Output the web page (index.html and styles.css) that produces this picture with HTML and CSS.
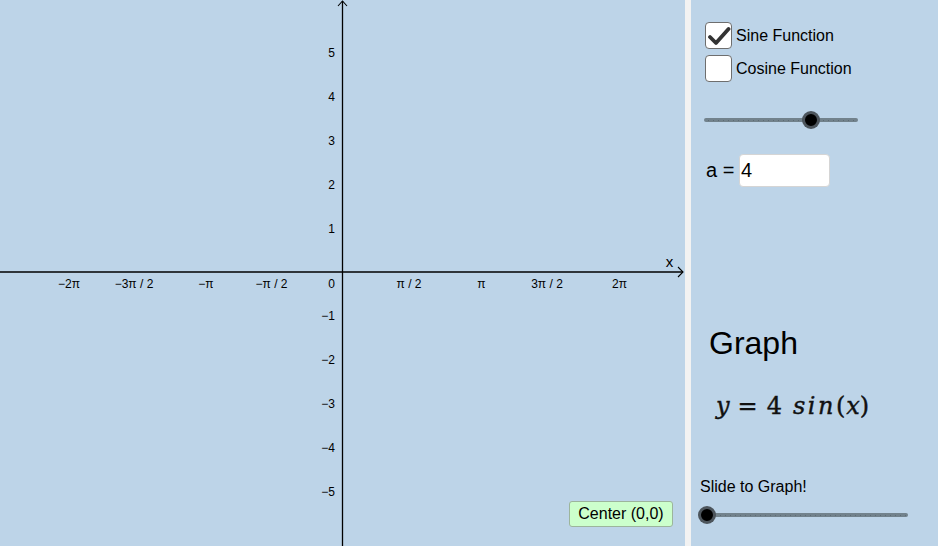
FILE: index.html
```html
<!DOCTYPE html>
<html>
<head>
<meta charset="utf-8">
<link rel="stylesheet" href="styles.css">
</head>
<body>
<div class="app">
  <div class="graph">
    <svg class="axes" width="685" height="546" viewBox="0 0 685 546">
      <line x1="0" y1="272" x2="683" y2="272" stroke="#000" stroke-width="1.3"/>
      <polyline points="678,267 683,272 678,277" fill="none" stroke="#000" stroke-width="1.1"/>
      <line x1="342.5" y1="1" x2="342.5" y2="546" stroke="#000" stroke-width="1.3"/>
      <polyline points="338,6 342.5,1 347,6" fill="none" stroke="#000" stroke-width="1.1"/>
      <g class="lbl" text-anchor="middle">
        <text x="69" y="288">−2π</text>
        <text x="134" y="288">−3π / 2</text>
        <text x="206" y="288">−π</text>
        <text x="271.5" y="288">−π / 2</text>
        <text x="331.5" y="288">0</text>
        <text x="409" y="288">π / 2</text>
        <text x="481.5" y="288">π</text>
        <text x="547" y="288">3π / 2</text>
        <text x="619.5" y="288">2π</text>
      </g>
      <g class="lbl" text-anchor="end">
        <text x="335" y="57">5</text>
        <text x="335" y="101">4</text>
        <text x="335" y="145">3</text>
        <text x="335" y="189">2</text>
        <text x="335" y="233">1</text>
        <text x="335" y="320">−1</text>
        <text x="335" y="364">−2</text>
        <text x="335" y="408">−3</text>
        <text x="335" y="452">−4</text>
        <text x="335" y="496">−5</text>
      </g>
      <text class="xlbl" x="669.5" y="267" text-anchor="middle">x</text>
    </svg>
    <button class="center-btn">Center (0,0)</button>
  </div>
  <div class="divider"></div>
  <div class="panel">
    <label class="check-row">
      <span class="box">
        <svg width="25" height="25" viewBox="0 0 25 25"><polyline points="4,14 10,20 22.5,6" fill="none" stroke="#333" stroke-width="3.8" stroke-linecap="round" stroke-linejoin="round"/></svg>
      </span>
      <span class="check-text">Sine Function</span>
    </label>
    <label class="check-row second">
      <span class="box"></span>
      <span class="check-text">Cosine Function</span>
    </label>
    <div class="slider slider-a">
      <div class="track"></div>
      <div class="knob" style="left: 107px"></div>
    </div>
    <div class="input-row">
      <span class="a-label">a =</span>
      <span class="input">4</span>
    </div>
    <div class="heading">Graph</div>
    <div class="math"><i class="v">y</i><span class="op">=</span><span class="num">4</span><i class="fn">sin</i><span class="paren">(</span><i class="v">x</i><span class="paren">)</span></div>
    <div class="slide-text">Slide to Graph!</div>
    <div class="slider slider-g">
      <div class="track"></div>
      <div class="knob" style="left: 1px"></div>
    </div>
  </div>
</div>
</body>
</html>
```

FILE: styles.css
```css
html, body {
  margin: 0;
  padding: 0;
}
body {
  width: 938px;
  height: 546px;
  overflow: hidden;
  background: #bdd4e8;
  font-family: "Liberation Sans", Arial, sans-serif;
  color: #000;
}
.app {
  display: flex;
  width: 938px;
  height: 546px;
}
.graph {
  position: relative;
  width: 685px;
  height: 546px;
  background: #bdd4e8;
  flex: none;
}
.axes {
  display: block;
}
.lbl text {
  font-family: "Liberation Sans", Arial, sans-serif;
  font-size: 12px;
  fill: #000;
}
.xlbl {
  font-family: "Liberation Sans", Arial, sans-serif;
  font-size: 15px;
  fill: #000;
}
.center-btn {
  position: absolute;
  left: 569px;
  top: 501px;
  width: 104px;
  height: 26px;
  padding: 0;
  margin: 0;
  background: #ccffcc;
  border: 1px solid #9cb59c;
  border-radius: 3px;
  font-family: "Liberation Sans", Arial, sans-serif;
  font-size: 16px;
  color: #000;
  box-sizing: border-box;
}
.divider {
  width: 6px;
  flex: none;
  background: #f2f2f2;
}
.panel {
  flex: 1;
  display: flex;
  flex-direction: column;
  padding: 22px 0 0 14px;
  box-sizing: border-box;
  background: #bdd4e8;
}
.check-row {
  display: flex;
  align-items: center;
  height: 27px;
  gap: 4px;
}
.check-row.second {
  margin-top: 6px;
}
.box {
  width: 27px;
  height: 27px;
  box-sizing: border-box;
  border: 1.5px solid #6e6e6e;
  border-radius: 4px;
  background: #fff;
  display: flex;
  align-items: center;
  justify-content: center;
}
.box svg {
  display: block;
}
.check-text {
  font-size: 16px;
  line-height: 20px;
  margin-top: 1px;
}
.slider {
  position: relative;
  height: 18px;
}
.slider-a {
  margin-top: 29px;
  margin-left: -1px;
  width: 154px;
}
.slider-g {
  margin-top: 9px;
  margin-left: 1px;
  width: 202px;
}
.track {
  position: absolute;
  left: 0;
  right: 0;
  top: 7px;
  height: 4px;
  border-radius: 2px;
  background:
    repeating-linear-gradient(90deg, transparent 0 4px, #5d6b74 4px 5px) center / 100% 1px no-repeat,
    #72828c;
}
.knob {
  position: absolute;
  top: 0;
  width: 18px;
  height: 18px;
  margin-left: -9px;
  box-sizing: border-box;
  border-radius: 50%;
  background: #000;
  border: 3px solid rgba(90, 100, 108, 0.85);
}
.input-row {
  display: flex;
  align-items: center;
  margin-top: 25px;
  height: 33px;
}
.a-label {
  font-size: 20px;
  margin-left: 1px;
  width: 33px;
}
.input {
  width: 91px;
  height: 33px;
  box-sizing: border-box;
  background: #fff;
  border: 1px solid #d5d5d5;
  border-radius: 4px;
  font-size: 20px;
  line-height: 31px;
  padding-left: 1px;
}
.heading {
  font-size: 32px;
  line-height: 36px;
  margin-top: 138px;
  margin-left: 4px;
}
.math {
  display: flex;
  align-items: baseline;
  font-family: "DejaVu Serif", "Liberation Serif", serif;
  font-size: 24px;
  line-height: 30px;
  margin-top: 30px;
  margin-left: 11px;
  white-space: nowrap;
  color: #111;
  -webkit-text-stroke: 0.4px #111;
}
.math i {
  font-style: italic;
}
.math .op {
  margin: 0 9px 0 8px;
}
.math .num {
  margin-right: 11px;
}
.math .fn {
  letter-spacing: 2.5px;
}
.math .paren + .v {
  margin-left: 1px;
}
.slide-text {
  font-size: 16px;
  line-height: 20px;
  margin-top: 56px;
  margin-left: -5px;
}
```
